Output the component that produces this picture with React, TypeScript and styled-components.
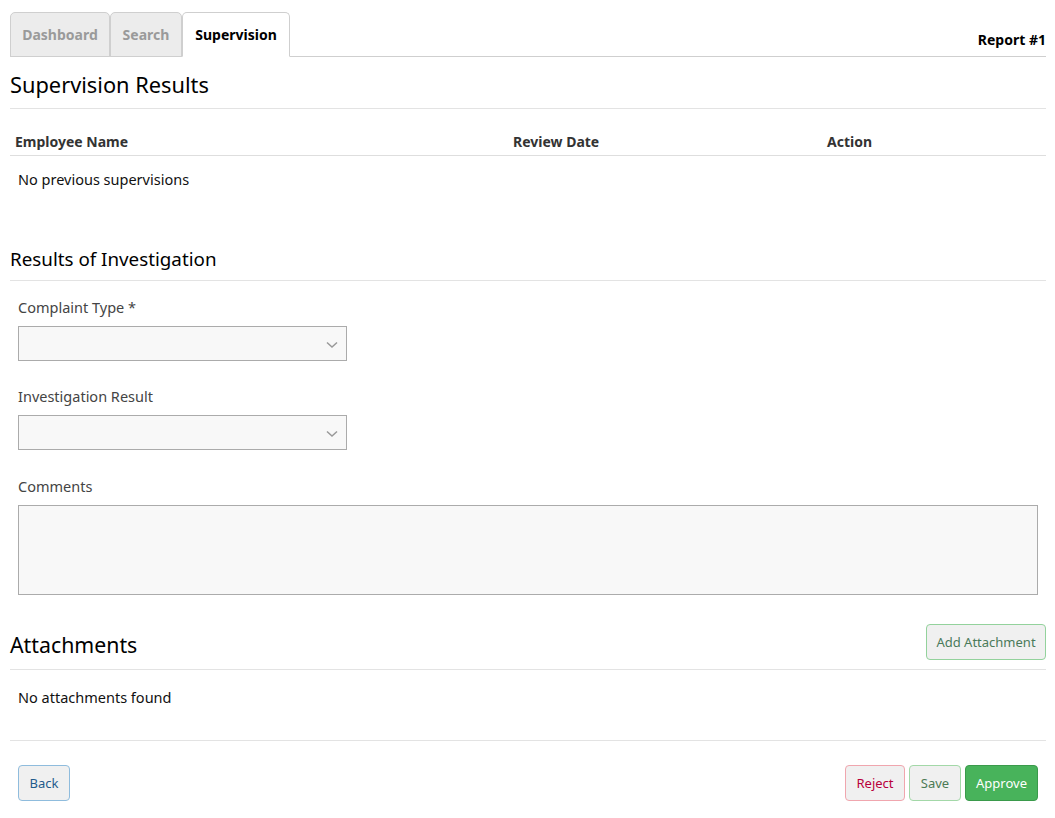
import React from "react";
import styled, { createGlobalStyle } from "styled-components";

const Global = createGlobalStyle`
  html, body { margin: 0; padding: 0; background: #fff; }
  body { font-family: "Noto Sans", "Open Sans", Arial, sans-serif; color: #222; }
  * { box-sizing: border-box; }
`;

const Page = styled.div`
  padding: 12px 9px 16px 10px;
  width: 1055px;
`;

const TabBar = styled.div`
  display: flex;
  align-items: flex-end;
  border-bottom: 1px solid #cfcfcf;
  height: 45px;
`;

const Tab = styled.div<{ $active?: boolean; $w: number }>`
  width: ${(p) => p.$w}px;
  height: 45px;
  margin-bottom: -1px;
  display: flex;
  align-items: center;
  justify-content: center;
  padding-bottom: 0;
  font-size: 14px;
  font-weight: 700;
  border: 1px solid #cfcfcf;
  border-radius: 5px 5px 0 0;
  background: ${(p) => (p.$active ? "#fff" : "#ececec")};
  color: ${(p) => (p.$active ? "#000" : "#9a9a9a")};
  border-bottom-color: ${(p) => (p.$active ? "#fff" : "#cfcfcf")};
`;

const ReportLabel = styled.div`
  margin-left: auto;
  font-size: 14px;
  font-weight: 700;
  color: #000;
  padding-bottom: 7px;
`;

const SectionTitle = styled.h2<{ $size: number; $top: number; $bottom: number }>`
  margin: ${(p) => p.$top}px 0 0;
  padding-bottom: ${(p) => p.$bottom}px;
  font-size: ${(p) => p.$size}px;
  line-height: 28px;
  font-weight: 400;
  color: #000;
  border-bottom: 1px solid #e3e3e3;
`;

const Table = styled.div`
  margin-top: 17px;
`;

const HeadRow = styled.div`
  display: grid;
  grid-template-columns: 498px 314px 1fr;
  border-bottom: 1px solid #dedede;
`;

const HeadCell = styled.div`
  padding: 6px 5px 3px;
  line-height: 20px;
  font-size: 14px;
  font-weight: 700;
  color: #333;
`;

const Message = styled.div<{ $top: number }>`
  padding: ${(p) => p.$top}px 8px 0;
  line-height: 20px;
  font-size: 14.5px;
  color: #111;
`;

const FormGroup = styled.div<{ $top: number }>`
  margin-top: ${(p) => p.$top}px;
  padding: 0 8px;
  display: flex;
  flex-direction: column;
  gap: 9px;
`;

const Label = styled.label`
  line-height: 20px;
  font-size: 14.5px;
  color: #444;
`;

const SelectBox = styled.div`
  position: relative;
  width: 329px;
  height: 35px;
  background: #f8f8f8;
  border: 1px solid #ababab;
`;

const Chevron = styled.svg`
  position: absolute;
  right: 8px;
  top: 14px;
`;

const TextArea = styled.div`
  width: 100%;
  height: 90px;
  background: #f8f8f8;
  border: 1px solid #ababab;
`;

const AttachHeader = styled.div`
  margin-top: 29px;
  display: flex;
  align-items: flex-end;
  justify-content: space-between;
  padding-bottom: 9px;
  border-bottom: 1px solid #e3e3e3;
`;

const AttachTitle = styled.h2`
  margin: 0;
  font-size: 21.3px;
  line-height: 30px;
  font-weight: 400;
  color: #000;
`;

const Divider = styled.div`
  margin-top: 33px;
  border-top: 1px solid #e3e3e3;
`;

const Footer = styled.div`
  margin-top: 24px;
  padding: 0 8px;
  display: flex;
  align-items: center;
  gap: 4px;
`;

type Variant = "back" | "reject" | "save" | "approve" | "add";

const palette: Record<Variant, { bg: string; border: string; color: string }> = {
  back: { bg: "#f0f0f0", border: "#8fbcdd", color: "#1f5b8c" },
  reject: { bg: "#f0f0f0", border: "#f0a6ae", color: "#b8003c" },
  save: { bg: "#f0f0f0", border: "#a3d8a8", color: "#4c7a55" },
  approve: { bg: "#48b35b", border: "#3a9a4b", color: "#ffffff" },
  add: { bg: "#f0f0f0", border: "#93d29c", color: "#4a7a5a" },
};

const Button = styled.button<{ $v: Variant; $w: number }>`
  width: ${(p) => p.$w}px;
  height: 36px;
  padding: 0;
  font-family: inherit;
  font-size: 13px;
  border-radius: 4px;
  border: 1px solid ${(p) => palette[p.$v].border};
  background: ${(p) => palette[p.$v].bg};
  color: ${(p) => palette[p.$v].color};
  cursor: pointer;
`;

const Spacer = styled.div`
  flex: 1;
`;

const Select = () => (
  <SelectBox>
    <Chevron width="12" height="8" viewBox="0 0 12 8">
      <path d="M1 1.5 L6 6 L11 1.5" fill="none" stroke="#999" strokeWidth="1.5" />
    </Chevron>
  </SelectBox>
);

export default function App() {
  return (
    <Page>
      <Global />
      <TabBar>
        <Tab $w={100}>Dashboard</Tab>
        <Tab $w={72}>Search</Tab>
        <Tab $w={108} $active>
          Supervision
        </Tab>
        <ReportLabel>Report #1</ReportLabel>
      </TabBar>

      <SectionTitle $size={21.8} $top={14} $bottom={9}>
        Supervision Results
      </SectionTitle>

      <Table>
        <HeadRow>
          <HeadCell>Employee Name</HeadCell>
          <HeadCell>Review Date</HeadCell>
          <HeadCell>Action</HeadCell>
        </HeadRow>
        <Message $top={13}>No previous supervisions</Message>
      </Table>

      <SectionTitle $size={18.8} $top={56} $bottom={7}>
        Results of Investigation
      </SectionTitle>

      <FormGroup $top={16}>
        <Label>Complaint Type *</Label>
        <Select />
      </FormGroup>
      <FormGroup $top={25}>
        <Label>Investigation Result</Label>
        <Select />
      </FormGroup>
      <FormGroup $top={26}>
        <Label>Comments</Label>
        <TextArea />
      </FormGroup>

      <AttachHeader>
        <AttachTitle>Attachments</AttachTitle>
        <Button $v="add" $w={120}>
          Add Attachment
        </Button>
      </AttachHeader>
      <Message $top={17}>No attachments found</Message>

      <Divider />

      <Footer>
        <Button $v="back" $w={52}>
          Back
        </Button>
        <Spacer />
        <Button $v="reject" $w={60}>
          Reject
        </Button>
        <Button $v="save" $w={52}>
          Save
        </Button>
        <Button $v="approve" $w={73}>
          Approve
        </Button>
      </Footer>
    </Page>
  );
}
